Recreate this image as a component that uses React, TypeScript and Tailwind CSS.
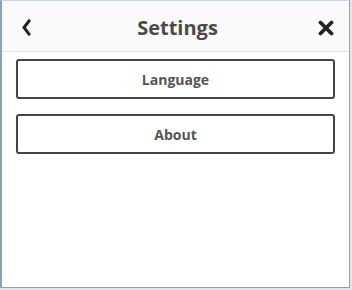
export default function App() {
  return (
    <div className="h-[290px] w-[352px] bg-[#dfe7ef] pr-[2px] pb-[2px]" style={{ fontFamily: '"Open Sans", "Liberation Sans", sans-serif' }}>
      <div className="flex h-[288px] w-[350px] flex-col border border-l-2 border-[#8aa3bd] border-t-[#c9d6e3] bg-white">
        <div className="flex h-[51px] items-center justify-between border-b border-[#e6e6e6] bg-[#fafafa] pr-[15px] pl-[19px] pt-[3px]">
          <button type="button" className="flex w-[16px] items-center justify-start text-[#222]">
            <svg width="10" height="17" viewBox="0 0 10 17" fill="none" stroke="currentColor" strokeWidth="3" strokeLinecap="square">
              <path d="M8 2L3 8.5 8 15" />
            </svg>
          </button>
          <h1 className="text-[20px] font-bold text-[#4a4a4a]">Settings</h1>
          <button type="button" className="flex w-[16px] items-center justify-end text-[#222]">
            <svg width="16" height="16" viewBox="0 0 16 16" fill="none" stroke="currentColor" strokeWidth="3.8" strokeLinecap="round">
              <path d="M2.5 2.5l11 11M13.5 2.5l-11 11" />
            </svg>
          </button>
        </div>
        <div className="flex flex-col gap-[15px] px-[14px] pt-[7px]">
          <button type="button" className="h-[40px] rounded-[3px] border-2 border-[#444] text-[14px] font-bold text-[#555]">
            Language
          </button>
          <button type="button" className="h-[40px] rounded-[3px] border-2 border-[#444] text-[14px] font-bold text-[#555]">
            About
          </button>
        </div>
      </div>
    </div>
  );
}
